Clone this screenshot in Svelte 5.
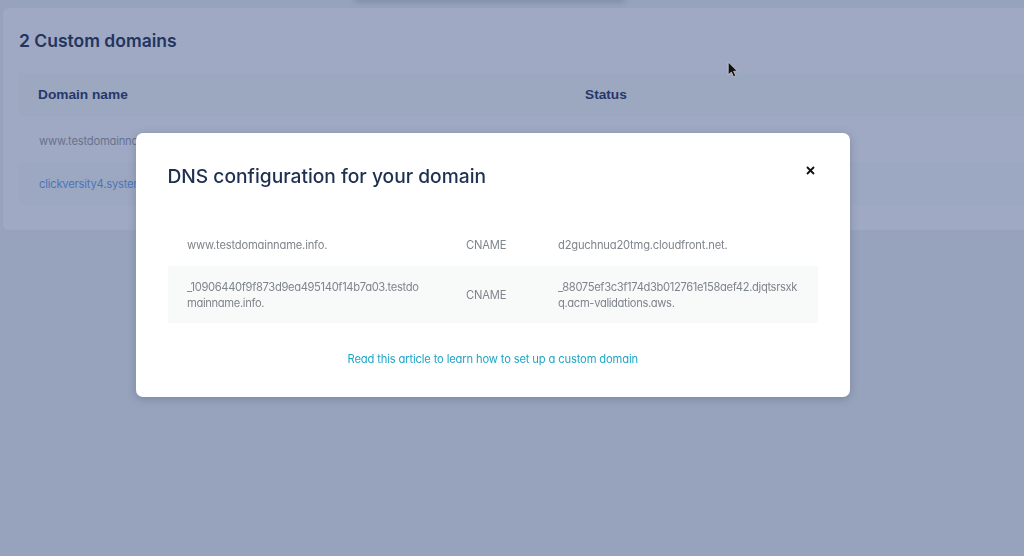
<script>
	let domains = [
		{ name: 'www.testdomainname.info', link: false },
		{ name: 'clickversity4.systeme.io', link: true }
	];
	let records = [
		{ host: 'www.testdomainname.info.', type: 'CNAME', value: 'd2guchnua20tmg.cloudfront.net.' },
		{
			host: '_10906440f9f873d9ea495140f14b7a03.testdomainname.info.',
			type: 'CNAME',
			value: '_88075ef3c3f174d3b012761e158aef42.djqtsrsxkq.acm-validations.aws.'
		}
	];
</script>

<div class="page">
	<div class="topbar"><div class="tab-shadow"></div></div>
	<section class="card">
		<h2>2 Custom domains</h2>
		<div class="row head">
			<div class="col-name">Domain name</div>
			<div>Status</div>
		</div>
		{#each domains as d}
			<div class="row item" class:link={d.link}>
				<div class="col-name">{d.name}</div>
			</div>
		{/each}
	</section>
</div>

<div class="modal">
	<div class="modal-head">
		<h3>DNS configuration for your domain</h3>
		<button class="close" aria-label="Close">
			<svg width="9" height="9" viewBox="0 0 9 9"><path d="M1 1l7 7M8 1l-7 7" stroke="#111" stroke-width="1.8" fill="none" /></svg>
		</button>
	</div>
	<div class="records">
		{#each records as r}
			<div class="rec">
				<div class="host">{r.host}</div>
				<div class="type">{r.type}</div>
				<div class="value">{r.value}</div>
			</div>
		{/each}
	</div>
	<div class="help">Read this article to learn how to set up a custom domain</div>
</div>

<svg class="cursor" width="11" height="17" viewBox="0 0 10 16">
	<path d="M1 1v12l3-2.6 2 4.4 2-1-2-4.2h3.6z" fill="#111" stroke="#dfe3ec" stroke-width="0.6" />
</svg>

<style>
	:global(body) {
		margin: 0;
		background: #97a3bd;
		overflow: hidden;
	}
	.page {
		height: 556px;
		overflow: hidden;
		font-family: Inter, sans-serif;
	}
	.topbar {
		height: 8px;
		background: #97a3bd;
		position: relative;
	}
	.tab-shadow {
		position: absolute;
		left: 355px;
		top: -6px;
		width: 270px;
		height: 8px;
		background: #7f8aa6;
		filter: blur(3px);
	}
	.card {
		margin-left: 3px;
		height: 222px;
		background: #9fa9c3;
		border-radius: 6px 0 0 6px;
		padding: 0 0 0 16px;
		box-sizing: border-box;
	}
	h2 {
		margin: 0;
		padding-top: 22px;
		height: 43px;
		font-size: 17.5px;
		line-height: 22px;
		font-weight: 600;
		color: #23345f;
	}
	.row {
		display: flex;
		align-items: center;
		padding-left: 19px;
	}
	.head {
		height: 42px;
		padding-bottom: 1px;
		background: #9ca7c0;
		font-family: "Liberation Sans", sans-serif;
		font-weight: 700;
		font-size: 13.7px;
		color: #27376a;
	}
	.col-name {
		width: 547px;
		flex: none;
	}
	.item {
		height: 43px;
		font-family: Inter, sans-serif;
		font-feature-settings: "cv11";
		font-size: 11.2px;
		letter-spacing: -0.2px;
		color: #69738e;
		padding-left: 20px;
	}
	.head + .item {
		margin-top: 3px;
	}
	.item.link {
		color: #4a76b8;
		background: #9ca7c1;
	}
	.modal {
		position: fixed;
		left: 135.5px;
		top: 133px;
		width: 714.5px;
		height: 264px;
		box-sizing: border-box;
		padding: 0 32px;
		background: #fff;
		border-radius: 7px;
		box-shadow: 0 2px 8px rgba(60, 70, 100, 0.3);
	}
	.modal-head {
		display: flex;
		justify-content: space-between;
		height: 90px;
		position: relative;
	}
	h3 {
		margin: 0;
		padding-top: 31px;
		font-family: Inter, sans-serif;
		font-size: 19.2px;
		line-height: 25px;
		font-weight: 550;
		color: #1e3050;
	}
	.close {
		position: absolute;
		right: 3px;
		top: 33px;
		padding: 0;
		border: 0;
		background: none;
		width: 9px;
		height: 9px;
		display: flex;
	}
	.rec {
		display: flex;
		align-items: center;
		padding-left: 19.5px;
		font-family: Inter, sans-serif;
		font-feature-settings: "cv11";
		font-size: 11.2px;
		letter-spacing: -0.2px;
		line-height: 18px;
		color: #7f858c;
		min-height: 43px;
	}
	.rec:nth-child(2) {
		background: #f8fafa;
		height: 57px;
		line-height: 16px;
		letter-spacing: -0.35px;
	}
	.host {
		width: 238px;
		margin-right: 41px;
		overflow-wrap: anywhere;
	}
	.type {
		width: 92px;
		flex: none;
		letter-spacing: -0.2px;
	}
	.value {
		width: 240px;
		overflow-wrap: anywhere;
	}
	.help {
		margin-top: 27px;
		text-align: center;
		font-family: Inter, sans-serif;
		font-feature-settings: "cv11";
		font-size: 11.2px;
		letter-spacing: -0.15px;
		line-height: 18px;
		color: #1fa6c6;
	}
	.cursor {
		position: fixed;
		left: 727px;
		top: 61px;
	}
</style>
